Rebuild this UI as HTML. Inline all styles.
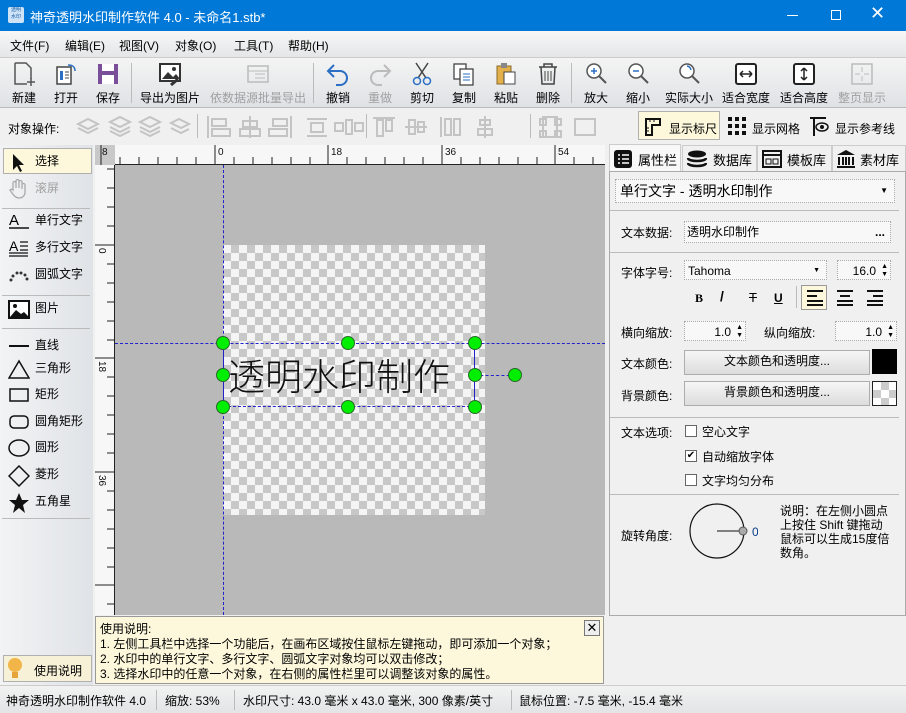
<!DOCTYPE html>
<html><head><meta charset="utf-8">
<style>
*{box-sizing:border-box;margin:0;padding:0}
body{width:906px;height:713px;overflow:hidden;background:#f0f0f0;font-family:"Liberation Sans","Noto Sans CJK SC",sans-serif;font-size:12px;color:#000;position:relative}
.abs{position:absolute}
#title{left:0;top:0;width:906px;height:31px;background:#0078d7;color:#fff;font-size:13px}
#menu{top:31px;left:0;width:906px;height:26px;background:linear-gradient(#f7f7f7,#e4e6e8)}
#menu span{position:absolute;top:6px;font-size:12px}
#tb{top:57px;left:0;width:906px;height:51px;background:linear-gradient(#f4f4f4,#dfe2e5);border-top:1px solid #ccc;border-bottom:1px solid #bbb}
.tbi{position:absolute;top:3px;text-align:center;font-size:12px}
.tbi svg{display:block;margin:0 auto 2px}
.dis{color:#a0a0a0}
.sep{position:absolute;width:1px;background:#bbb}
#ops{top:108px;left:0;width:906px;height:36px;background:#f0f0f0}
#left{top:145px;left:0;width:93px;height:540px;background:linear-gradient(90deg,#f2f3f4,#dfe3e7)}
.li{position:absolute;left:6px;font-size:12px;height:22px;line-height:22px}
.li svg{position:absolute;left:2px;top:2px}
.li b{font-weight:normal;position:absolute;left:29px;white-space:nowrap}
.hsep{position:absolute;left:2px;width:88px;height:1px;background:#bbb}
#canvas{left:115px;top:165px;width:490px;height:450px;background:#b9b9b9;overflow:hidden}
#checker{left:108px;top:80px;width:262px;height:270px;background-color:#f4f4f4;background-image:linear-gradient(45deg,#c8c8c8 25%,transparent 25%,transparent 75%,#c8c8c8 75%),linear-gradient(45deg,#c8c8c8 25%,transparent 25%,transparent 75%,#c8c8c8 75%);background-size:16px 16px;background-position:0 0,8px 8px}
.h{position:absolute;width:14px;height:14px;border-radius:50%;background:#0e0;border:1px solid #286a28;margin:-7px 0 0 -7px}
#right{left:607px;top:145px;width:299px;height:540px}
#right .pn div{line-height:14px}
.tab{position:absolute;top:0;height:26px;font-size:13px;line-height:26px;border:1px solid #ccc;border-bottom:none;background:#f0f0f0}
.lbl{position:absolute;left:11px;font-size:12px}
.box{position:absolute;border:1px dotted #aaa;background:#f8f8f8}
#right .pn .box,#right .pn .btn{line-height:20px}
.btn{position:absolute;left:74px;width:186px;height:25px;border:1px solid #adadad;background:linear-gradient(#f6f6f6,#dcdcdc);text-align:center}
.rsep{position:absolute;left:0;width:289px;height:1px;background:#bbb}
#status{left:0;top:685px;width:906px;height:28px;background:linear-gradient(#f2f2f2,#e2e4e6);border-top:1px solid #ccc;font-size:12px}
#status span{position:absolute;top:6px}
</style></head><body>

<div id="title" class="abs">
 <div class="abs" style="left:8px;top:7px;width:16px;height:16px;background:#cfe3f7;border-radius:2px;font-size:5px;color:#0b58a6;line-height:7px;text-align:center">透明<br>水印</div>
 <div class="abs" style="left:30px;top:7px">神奇透明水印制作软件 4.0 - 未命名1.stb*</div>
 <div class="abs" style="left:787px;top:15px;width:11px;height:1px;background:#fff"></div>
 <div class="abs" style="left:831px;top:10px;width:10px;height:10px;border:1px solid #fff"></div>
 <div class="abs" style="left:870px;top:3px;font-size:18px">✕</div>
</div>

<div id="menu" class="abs">
 <span style="left:10px">文件(F)</span><span style="left:65px">编辑(E)</span><span style="left:119px">视图(V)</span><span style="left:175px">对象(O)</span><span style="left:234px">工具(T)</span><span style="left:288px">帮助(H)</span>
</div>

<div id="tb" class="abs">
 <div class="tbi" style="left:10px;width:28px"><svg width="24" height="26"><path d="M3 2h11l5 5v11M3 2v21h12" fill="none" stroke="#555" stroke-width="1.5"/><path d="M19 17v8M15 21h8" stroke="#555" stroke-width="1.5"/></svg>新建</div>
 <div class="tbi" style="left:52px;width:28px"><svg width="24" height="26"><rect x="3" y="6" width="14" height="17" fill="#fff" stroke="#444" stroke-width="1.5"/><rect x="6" y="10" width="3" height="9" fill="#2a6fc4"/><path d="M11 11h4M11 14h4M11 17h4" stroke="#444"/><path d="M14 4c5 0 7 2 7 6" fill="none" stroke="#2a6fc4" stroke-width="1.5"/></svg>打开</div>
 <div class="tbi" style="left:94px;width:28px"><svg width="24" height="26"><rect x="2" y="3" width="20" height="20" fill="#7a4e98"/><rect x="6" y="3" width="12" height="7" fill="#fff"/><rect x="6" y="14" width="12" height="9" fill="#fff"/></svg>保存</div>
 <div class="sep" style="left:131px;top:5px;height:40px"></div>
 <div class="tbi" style="left:138px;width:64px"><svg width="26" height="26"><rect x="3" y="3" width="20" height="17" fill="#fff" stroke="#333" stroke-width="2"/><path d="M5 18l6-7 5 5 3-3 4 5z" fill="#333"/><circle cx="17" cy="8" r="2" fill="#333"/><path d="M14 24l7-6" stroke="#333" stroke-width="3"/></svg>导出为图片</div>
 <div class="tbi dis" style="left:209px;width:98px"><svg width="26" height="26"><rect x="3" y="5" width="20" height="16" fill="none" stroke="#bbb" stroke-width="1.5"/><path d="M3 10h20M10 13h10M10 17h10" stroke="#bbb"/></svg>依数据源批量导出</div>
 <div class="sep" style="left:313px;top:5px;height:40px"></div>
 <div class="tbi" style="left:324px;width:28px"><svg width="26" height="26"><path d="M9 4L3 10l6 6M3 10h12a7 7 0 010 14h-4" fill="none" stroke="#2a6fc4" stroke-width="2"/></svg>撤销</div>
 <div class="tbi dis" style="left:366px;width:28px"><svg width="26" height="26"><path d="M17 4l6 6-6 6M23 10H11a7 7 0 000 14h4" fill="none" stroke="#bbb" stroke-width="2"/></svg>重做</div>
 <div class="tbi" style="left:408px;width:28px"><svg width="26" height="26"><path d="M7 2l10 15M19 2L9 17" stroke="#444" stroke-width="1.5"/><circle cx="8" cy="20" r="3.5" fill="none" stroke="#2a6fc4" stroke-width="1.5"/><circle cx="18" cy="20" r="3.5" fill="none" stroke="#2a6fc4" stroke-width="1.5"/></svg>剪切</div>
 <div class="tbi" style="left:450px;width:28px"><svg width="26" height="26"><rect x="3" y="3" width="12" height="15" fill="#fff" stroke="#444" stroke-width="1.3"/><rect x="9" y="8" width="13" height="16" fill="#fff" stroke="#444" stroke-width="1.3"/><path d="M12 13h7M12 16h7M12 19h7" stroke="#2a6fc4"/></svg>复制</div>
 <div class="tbi" style="left:492px;width:28px"><svg width="26" height="26"><rect x="4" y="5" width="14" height="18" fill="#e3b04b" stroke="#8a6a2a"/><rect x="8" y="2" width="6" height="5" fill="#888"/><rect x="11" y="11" width="11" height="12" fill="#fff" stroke="#444"/></svg>粘贴</div>
 <div class="tbi" style="left:534px;width:28px"><svg width="26" height="26"><path d="M4 6h18M9 6V3h8v3M6 6l1 17h12l1-17" fill="none" stroke="#444" stroke-width="1.5"/><path d="M10 10v10M13 10v10M16 10v10" stroke="#444"/></svg>删除</div>
 <div class="sep" style="left:571px;top:5px;height:40px"></div>
 <div class="tbi" style="left:582px;width:28px"><svg width="26" height="26"><circle cx="11" cy="10" r="7" fill="#fff" stroke="#555" stroke-width="1.5"/><path d="M16 15l7 7" stroke="#555" stroke-width="2"/><path d="M8 10h6M11 7v6" stroke="#2a6fc4" stroke-width="1.5"/></svg>放大</div>
 <div class="tbi" style="left:624px;width:28px"><svg width="26" height="26"><circle cx="11" cy="10" r="7" fill="#fff" stroke="#555" stroke-width="1.5"/><path d="M16 15l7 7" stroke="#555" stroke-width="2"/><path d="M8 10h6" stroke="#2a6fc4" stroke-width="1.5"/></svg>缩小</div>
 <div class="tbi" style="left:664px;width:50px"><svg width="26" height="26"><circle cx="11" cy="10" r="7" fill="#fff" stroke="#555" stroke-width="1.5"/><path d="M16 15l7 7" stroke="#555" stroke-width="2"/><path d="M11 5a5 5 0 014 4" stroke="#2a6fc4" stroke-width="1.5" fill="none"/></svg>实际大小</div>
 <div class="tbi" style="left:720px;width:52px"><svg width="26" height="26"><rect x="3" y="3" width="20" height="20" rx="2" fill="#fff" stroke="#222" stroke-width="2"/><path d="M7 13h12M7 13l3-3M7 13l3 3M19 13l-3-3M19 13l-3 3" stroke="#222" stroke-width="1.5" fill="none"/></svg>适合宽度</div>
 <div class="tbi" style="left:778px;width:52px"><svg width="26" height="26"><rect x="3" y="3" width="20" height="20" rx="2" fill="#fff" stroke="#222" stroke-width="2"/><path d="M13 7v12M13 7l-3 3M13 7l3 3M13 19l-3-3M13 19l3-3" stroke="#222" stroke-width="1.5" fill="none"/></svg>适合高度</div>
 <div class="tbi dis" style="left:836px;width:52px"><svg width="26" height="26"><rect x="3" y="3" width="20" height="20" fill="none" stroke="#bbb" stroke-width="1.5"/><path d="M13 6v5M13 15v5M6 13h5M15 13h5" stroke="#bbb"/></svg>整页显示</div>
</div>

<div id="ops" class="abs">
 <div class="abs" style="left:8px;top:12px">对象操作:</div>
 <svg class="abs" style="left:75px;top:6px" width="530" height="26" fill="none" stroke="#c4c4c4" stroke-width="2">
  <path d="M3 10l10-5 10 5-10 5z M3 14l10 5 10-5"/>
  <path d="M35 8l10-5 10 5-10 5z M35 13l10 5 10-5 M35 17l10 5 10-5"/>
  <path d="M65 8l10-5 10 5-10 5z M65 13l10 5 10-5 M65 17l10 5 10-5"/>
  <path d="M96 9l8-4 10 5-8 4z M96 14l10 5 8-4"/>
  <path d="M133 2v22M137 5h14v7h-14z M137 15h18v7h-18z"/>
  <path d="M175 2v22M168 7h14v6h-14z M165 15h20v7h-20z"/>
  <path d="M216 2v22M198 5h14v7h-14z M194 15h18v7h-18z"/>
  <path d="M232 5h20M232 22h20M236 9h12v9h-12z"/>
  <path d="M260 9h8v8h-8z M271 6h6v14h-6z M280 9h8v8h-8z"/>
  <path d="M298 4h22M302 6h6v16h-6z M311 6h6v11h-6z"/>
  <path d="M330 13h22M334 6h6v14h-6z M343 8h6v10h-6z"/>
  <path d="M366 3v20M370 5h6v16h-6z M379 5h6v16h-6z"/>
  <path d="M410 2v22M405 6h10v5h-10z M403 15h14v6h-14z"/>
  <path d="M468 3h14v20h-14z M465 5h6v6h-6z M480 5h6v6h-6z M465 17h6v6h-6z M480 17h6v6h-6z"/>
  <path d="M500 5h20v16h-20z"/>
 </svg>
 <div class="sep" style="left:197px;top:6px;height:24px"></div>
 <div class="sep" style="left:366px;top:6px;height:24px"></div>
 <div class="sep" style="left:530px;top:6px;height:24px"></div>
 <div class="abs" style="left:638px;top:3px;width:82px;height:29px;border:1px solid #b0b0b0;background:#fdf8dc"></div>
 <svg class="abs" style="left:643px;top:9px" width="20" height="20"><path d="M3 2h14v6H9v10H3z" fill="none" stroke="#111" stroke-width="2"/><path d="M7 2v3M11 2v3M3 11h3M3 14h3" stroke="#111"/></svg>
 <div class="abs" style="left:669px;top:12px">显示标尺</div>
 <svg class="abs" style="left:728px;top:9px" width="18" height="18" fill="#111"><rect x="0" y="0" width="4" height="4"/><rect x="7" y="0" width="4" height="4"/><rect x="14" y="0" width="4" height="4"/><rect x="0" y="7" width="4" height="4"/><rect x="7" y="7" width="4" height="4"/><rect x="14" y="7" width="4" height="4"/><rect x="0" y="14" width="4" height="4"/><rect x="7" y="14" width="4" height="4"/><rect x="14" y="14" width="4" height="4"/></svg>
 <div class="abs" style="left:752px;top:12px">显示网格</div>
 <svg class="abs" style="left:808px;top:6px" width="22" height="24"><path d="M2 4h16M6 4v18" stroke="#111" stroke-width="2"/><ellipse cx="14" cy="13" rx="6" ry="4" fill="none" stroke="#111" stroke-width="1.5"/><circle cx="14" cy="13" r="2" fill="#111"/></svg>
 <div class="abs" style="left:835px;top:12px">显示参考线</div>
</div>

<div id="left" class="abs">
 <div class="abs" style="left:3px;top:3px;width:89px;height:26px;border:1px solid #b0b0b0;background:#fdf8dc"></div>
 <div class="li" style="top:5px"><svg width="20" height="20"><path d="M5 2v16l4-4 3 6 2-1-3-6h5z" fill="#111"/></svg><b>选择</b></div>
 <div class="li dis" style="top:32px"><svg width="20" height="20"><path d="M5 10V4a1.5 1.5 0 013 0v5V2a1.5 1.5 0 013 0v7V3a1.5 1.5 0 013 0v7V6a1.5 1.5 0 013 0v7c0 4-3 6-6 6s-5-2-7-5l-2-3c1-1 2-1 3 0z" fill="none" stroke="#aaa" stroke-width="1.3"/></svg><b>滚屏</b></div>
 <div class="hsep" style="top:63px"></div>
 <div class="li" style="top:64px"><svg width="22" height="20"><text x="1" y="14" font-size="15" font-family="Liberation Sans">A</text><path d="M1 17h20" stroke="#111" stroke-width="1.5"/></svg><b>单行文字</b></div>
 <div class="li" style="top:91px"><svg width="22" height="20"><text x="1" y="13" font-size="14" font-family="Liberation Sans">A</text><path d="M12 4h8M12 8h8M12 12h8M1 15h19M1 18h19" stroke="#111" stroke-width="1.2"/></svg><b>多行文字</b></div>
 <div class="li" style="top:118px"><svg width="22" height="20" fill="#333"><circle cx="3" cy="15" r="1.5"/><circle cx="5" cy="11" r="1.5"/><circle cx="9" cy="8" r="1.5"/><circle cx="13" cy="8" r="1.5"/><circle cx="17" cy="10" r="1.5"/><circle cx="19" cy="14" r="1.5"/></svg><b>圆弧文字</b></div>
 <div class="hsep" style="top:150px"></div>
 <div class="li" style="top:152px"><svg width="22" height="22"><rect x="1" y="2" width="20" height="17" fill="#fff" stroke="#111" stroke-width="2"/><path d="M2 18l6-7 5 4 3-2 5 5z" fill="#111"/><circle cx="7" cy="7" r="2" fill="#111"/></svg><b>图片</b></div>
 <div class="hsep" style="top:183px"></div>
 <div class="li" style="top:189px"><svg width="22" height="20"><path d="M1 10h20" stroke="#111" stroke-width="2"/></svg><b>直线</b></div>
 <div class="li" style="top:212px"><svg width="22" height="20"><path d="M11 2L1 19h20z" fill="none" stroke="#111" stroke-width="1.5"/></svg><b>三角形</b></div>
 <div class="li" style="top:238px"><svg width="22" height="20"><rect x="2" y="4" width="18" height="12" fill="none" stroke="#111" stroke-width="1.5"/></svg><b>矩形</b></div>
 <div class="li" style="top:265px"><svg width="22" height="20"><rect x="2" y="4" width="18" height="12" rx="4" fill="none" stroke="#111" stroke-width="1.5"/></svg><b>圆角矩形</b></div>
 <div class="li" style="top:291px"><svg width="22" height="20"><ellipse cx="11" cy="10" rx="10" ry="8" fill="none" stroke="#111" stroke-width="1.5"/></svg><b>圆形</b></div>
 <div class="li" style="top:318px"><svg width="22" height="22"><path d="M11 1l10 10-10 10L1 11z" fill="none" stroke="#111" stroke-width="1.5"/></svg><b>菱形</b></div>
 <div class="li" style="top:345px"><svg width="22" height="22"><path d="M11 1l3 7h7l-6 5 2 8-6-5-6 5 2-8-6-5h7z" fill="#111"/></svg><b>五角星</b></div>
 <div class="hsep" style="top:373px"></div>
 <div class="abs" style="left:3px;top:510px;width:89px;height:27px;border:1px solid #b0b0b0;background:#f7f2d7"></div>
 <svg class="abs" style="left:7px;top:512px" width="16" height="24"><circle cx="8" cy="8" r="7" fill="#f2b548"/><rect x="5" y="15" width="6" height="6" fill="#e6a43a"/></svg>
 <div class="abs" style="left:34px;top:517px">使用说明</div>
</div>

<div class="abs" style="left:95px;top:145px;width:510px;height:20px;background:#f7f7f7;border-bottom:1px solid #222"></div>
<div class="abs" style="left:95px;top:145px;width:20px;height:470px;background:#f7f7f7;border-right:1px solid #222"></div>
<div class="abs" style="left:95px;top:145px;width:20px;height:20px;background:#c8c8c8"></div>
<svg class="abs" style="left:95px;top:145px" width="510" height="470">
 <g stroke="#222" stroke-width="1">
  <path d="M120 0v20M233 0v20M347 0v20M460 0v20M6 0v20"/>
  <path d="M25 12v8M44 12v8M63 12v8M82 12v8M101 12v8M139 12v8M158 12v8M177 12v8M196 12v8M215 12v8M252 12v8M271 12v8M290 12v8M309 12v8M328 12v8M366 12v8M385 12v8M404 12v8M423 12v8M442 12v8M479 12v8M498 12v8"/>
  <path d="M0 100h20M0 213h20M0 327h20M0 440h20"/>
  <path d="M12 24h8M12 43h8M12 62h8M12 81h8M12 119h8M12 138h8M12 157h8M12 176h8M12 195h8M12 232h8M12 251h8M12 270h8M12 289h8M12 308h8M12 346h8M12 365h8M12 384h8M12 403h8M12 422h8M12 459h8"/>
 </g>
 <g font-size="10" font-family="Liberation Sans" fill="#111">
  <text x="123" y="10">0</text><text x="236" y="10">18</text><text x="350" y="10">36</text><text x="463" y="10">54</text><text x="7" y="10">8</text>
  <text transform="translate(4,103) rotate(90)">0</text><text transform="translate(4,216) rotate(90)">18</text><text transform="translate(4,330) rotate(90)">36</text>
 </g>
</svg>

<div id="canvas" class="abs">
 <div id="checker" class="abs"></div>
 <div class="abs" style="left:108px;top:0;width:0;height:450px;border-left:1px dashed #22c"></div>
 <div class="abs" style="left:0;top:178px;width:490px;height:0;border-top:1px dashed #22c"></div>
 <div class="abs" style="left:108px;top:178px;width:252px;height:64px;border:1px solid #22c;border-top:none;border-bottom:1px dashed #22c"></div>
 <div class="abs" style="left:360px;top:210px;width:40px;border-top:1px dashed #22c"></div>
 <div class="abs" style="left:113px;top:183px;font-size:37px;line-height:52px;font-family:'Noto Sans CJK SC',sans-serif;font-weight:300;color:#111">透明水印制作</div>
 <div class="h" style="left:108px;top:178px"></div><div class="h" style="left:233px;top:178px"></div><div class="h" style="left:360px;top:178px"></div>
 <div class="h" style="left:108px;top:210px"></div><div class="h" style="left:360px;top:210px"></div><div class="h" style="left:400px;top:210px"></div>
 <div class="h" style="left:108px;top:242px"></div><div class="h" style="left:233px;top:242px"></div><div class="h" style="left:360px;top:242px"></div>
</div>

<div class="abs" style="left:95px;top:616px;width:509px;height:68px;background:#fdf8dc;border:1px solid #999;font-size:12px;line-height:15px;padding:5px 0 0 4px">使用说明:<br>1. 左侧工具栏中选择一个功能后，在画布区域按住鼠标左键拖动，即可添加一个对象；<br>2. 水印中的单行文字、多行文字、圆弧文字对象均可以双击修改；<br>3. 选择水印中的任意一个对象，在右侧的属性栏里可以调整该对象的属性。</div>
<div class="abs" style="left:584px;top:620px;width:16px;height:16px;border:1px solid #777;background:#eee;text-align:center;line-height:14px;font-size:13px">✕</div>

<div id="right" class="abs">
 <div class="tab" style="left:2px;width:72px;top:-1px;height:28px;background:#f8f8f8"></div>
 <svg class="abs" style="left:7px;top:5px" width="18" height="18"><rect x="0" y="0" width="18" height="18" rx="3" fill="#111"/><path d="M4 5h2M8 5h7M4 9h2M8 9h7M4 13h2M8 13h7" stroke="#fff" stroke-width="1.5"/></svg>
 <div class="abs" style="left:31px;top:5px;font-size:13px">属性栏</div>
 <div class="tab" style="left:75px;width:75px"></div>
 <svg class="abs" style="left:80px;top:5px" width="20" height="18"><ellipse cx="10" cy="4" rx="9" ry="3.5" fill="#111"/><path d="M1 8c0 4 18 4 18 0M1 13c0 4 18 4 18 0" stroke="#111" stroke-width="2.5" fill="none"/></svg>
 <div class="abs" style="left:106px;top:5px;font-size:13px">数据库</div>
 <div class="tab" style="left:150px;width:75px"></div>
 <svg class="abs" style="left:155px;top:5px" width="20" height="18"><rect x="1" y="1" width="18" height="16" fill="none" stroke="#111" stroke-width="2"/><path d="M1 5h18" stroke="#111" stroke-width="2"/><rect x="4" y="9" width="5" height="5" fill="none" stroke="#111"/><rect x="11" y="9" width="5" height="5" fill="none" stroke="#111"/></svg>
 <div class="abs" style="left:180px;top:5px;font-size:13px">模板库</div>
 <div class="tab" style="left:225px;width:74px"></div>
 <svg class="abs" style="left:229px;top:4px" width="20" height="20"><path d="M10 1L1 6h18z" fill="#111"/><path d="M3 8v8M7 8v8M10 8v8M13 8v8M17 8v8" stroke="#111" stroke-width="2"/><rect x="1" y="17" width="18" height="2" fill="#111"/></svg>
 <div class="abs" style="left:253px;top:5px;font-size:13px">素材库</div>

 <div class="abs pn" style="left:2px;top:26px;width:297px;height:445px;border:1px solid #aaa;background:#f0f0f0">
  <div class="box" style="left:5px;top:7px;width:280px;height:24px;font-size:14px;line-height:22px !important;padding-left:4px">单行文字 - 透明水印制作<span style="position:absolute;right:6px;font-size:8px">▼</span></div>
  <div class="rsep" style="top:38px"></div>
  <div class="lbl" style="top:54px">文本数据:</div>
  <div class="box" style="left:74px;top:49px;width:207px;height:22px;padding-left:2px">透明水印制作<span style="position:absolute;right:5px;font-weight:bold">...</span></div>
  <div class="rsep" style="top:80px"></div>
  <div class="lbl" style="top:94px">字体字号:</div>
  <div class="box" style="left:74px;top:88px;width:143px;height:20px;padding-left:3px">Tahoma<span style="position:absolute;right:6px;font-size:7px">▼</span></div>
  <div class="box" style="left:227px;top:88px;width:54px;height:20px;text-align:right;padding-right:14px">16.0<span style="position:absolute;right:2px;font-size:7px;line-height:8px;top:2px">▲<br>▼</span></div>
  <div class="abs" style="left:85px;top:119px;font-weight:bold;font-family:'Liberation Serif';font-size:12px">B</div>
  <div class="abs" style="left:110px;top:117px;font-weight:bold;font-size:14px">/</div>
  <div class="abs" style="left:139px;top:119px;font-size:13px;text-decoration:line-through">T</div>
  <div class="abs" style="left:164px;top:119px;font-size:12px;text-decoration:underline;font-weight:bold">U</div>
  <div class="abs" style="left:186px;top:114px;width:1px;height:22px;background:#bbb"></div>
  <div class="abs" style="left:191px;top:113px;width:26px;height:25px;border:1px solid #999;background:#fdf8dc"></div>
  <svg class="abs" style="left:195px;top:117px" width="85" height="18"><g stroke="#111" stroke-width="2"><path d="M2 2h16M2 7h10M2 12h16M2 16h16"/><path d="M32 2h16M35 7h10M32 12h16M32 16h16"/><path d="M62 2h16M68 7h10M62 12h16M62 16h16"/></g></svg>
  <div class="lbl" style="top:154px">横向缩放:</div>
  <div class="box" style="left:74px;top:149px;width:62px;height:20px;text-align:right;padding-right:14px">1.0<span style="position:absolute;right:2px;font-size:7px;line-height:8px;top:2px">▲<br>▼</span></div>
  <div class="abs" style="left:154px;top:154px">纵向缩放:</div>
  <div class="box" style="left:225px;top:149px;width:62px;height:20px;text-align:right;padding-right:14px">1.0<span style="position:absolute;right:2px;font-size:7px;line-height:8px;top:2px">▲<br>▼</span></div>
  <div class="lbl" style="top:185px">文本颜色:</div>
  <div class="btn" style="top:178px">文本颜色和透明度...</div>
  <div class="abs" style="left:262px;top:177px;width:25px;height:25px;background:#000"></div>
  <div class="lbl" style="top:217px">背景颜色:</div>
  <div class="btn" style="top:209px">背景颜色和透明度...</div>
  <div class="abs" style="left:262px;top:209px;width:25px;height:25px;border:1px solid #222;background-color:#fff;background-image:linear-gradient(45deg,#ccc 25%,transparent 25%,transparent 75%,#ccc 75%),linear-gradient(45deg,#ccc 25%,transparent 25%,transparent 75%,#ccc 75%);background-size:16px 16px;background-position:0 0,8px 8px"></div>
  <div class="rsep" style="top:245px"></div>
  <div class="lbl" style="top:254px">文本选项:</div>
  <div class="abs" style="left:75px;top:253px;width:12px;height:12px;border:1px solid #666;background:#fff"></div><div class="abs" style="left:92px;top:253px">空心文字</div>
  <div class="abs" style="left:75px;top:278px;width:12px;height:12px;border:1px solid #666;background:#fff;font-size:10px;line-height:10px !important;text-align:center">✔</div><div class="abs" style="left:92px;top:278px">自动缩放字体</div>
  <div class="abs" style="left:75px;top:302px;width:12px;height:12px;border:1px solid #666;background:#fff"></div><div class="abs" style="left:92px;top:302px">文字均匀分布</div>
  <div class="rsep" style="top:322px"></div>
  <div class="lbl" style="top:357px">旋转角度:</div>
  <svg class="abs" style="left:78px;top:330px" width="70" height="60"><circle cx="29" cy="29" r="27" fill="none" stroke="#111" stroke-width="1.2"/><path d="M29 29h25" stroke="#111"/><circle cx="55" cy="29" r="4" fill="#aaa" stroke="#555"/><text x="64" y="34" font-size="12" font-family="Liberation Sans" fill="#0a3a8a">0</text></svg>
  <div class="abs" style="left:170px;top:332px;width:112px;font-size:12px">说明：在左侧小圆点上按住 Shift 键拖动鼠标可以生成15度倍数角。</div>
 </div>
</div>

<div id="status" class="abs">
 <span style="left:6px">神奇透明水印制作软件 4.0</span>
 <div class="sep" style="left:156px;top:4px;height:20px"></div>
 <span style="left:165px">缩放: 53%</span>
 <div class="sep" style="left:234px;top:4px;height:20px"></div>
 <span style="left:243px">水印尺寸: 43.0 毫米 x 43.0 毫米, 300 像素/英寸</span>
 <div class="sep" style="left:511px;top:4px;height:20px"></div>
 <span style="left:519px">鼠标位置: -7.5 毫米, -15.4 毫米</span>
</div>
</body></html>
